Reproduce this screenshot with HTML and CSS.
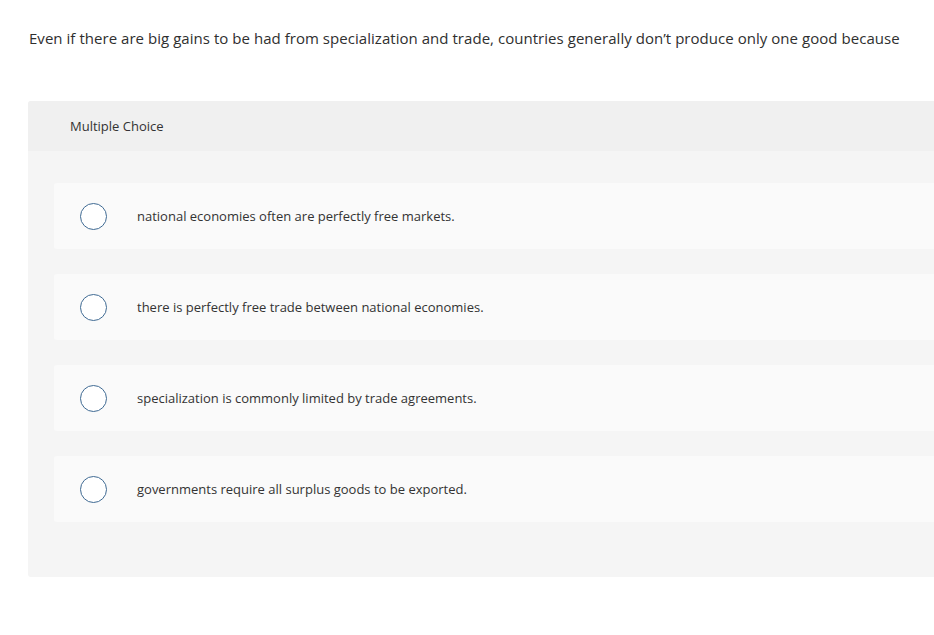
FILE: index.html
```html
<!DOCTYPE html>
<html>
<head>
<meta charset="utf-8">
<link rel="stylesheet" href="styles.css">
</head>
<body>
<div class="page">
  <p class="question">Even if there are big gains to be had from specialization and trade, countries generally don’t produce only one good because</p>
  <div class="panel">
    <div class="panel-header">Multiple Choice</div>
    <div class="options">
      <div class="option"><span class="radio"></span><span class="label">national economies often are perfectly free markets.</span></div>
      <div class="option"><span class="radio"></span><span class="label">there is perfectly free trade between national economies.</span></div>
      <div class="option"><span class="radio"></span><span class="label">specialization is commonly limited by trade agreements.</span></div>
      <div class="option"><span class="radio"></span><span class="label">governments require all surplus goods to be exported.</span></div>
    </div>
  </div>
</div>
</body>
</html>
```

FILE: styles.css
```css
html, body {
  margin: 0;
  padding: 0;
  background: #fff;
}
body {
  font-family: "Open Sans", "Lato", sans-serif;
  color: #333;
}
.page {
  padding: 28px 0 0 28px;
}
.question {
  margin: 0 0 0 1px;
  font-size: 15px;
  line-height: 20px;
  letter-spacing: 0.04px;
  color: #2f2f2f;
}
.panel {
  margin-top: 53px;
  background: #f5f5f5;
  border-radius: 3px 0 0 3px;
  overflow: hidden;
}
.panel-header {
  height: 50px;
  background: #f0f0f0;
  display: flex;
  align-items: center;
  padding-left: 42px;
  font-size: 13px;
  color: #333;
}
.options {
  display: flex;
  flex-direction: column;
  gap: 25px;
  padding: 32px 0 55px 26px;
}
.option {
  height: 66px;
  background: #fafafa;
  border-radius: 3px 0 0 3px;
  display: flex;
  align-items: center;
}
.radio {
  box-sizing: border-box;
  width: 27px;
  height: 27px;
  border: 1.5px solid #3f6a93;
  border-radius: 50%;
  background: #fff;
  margin-left: 26px;
  flex: none;
}
.label {
  margin-left: 30px;
  font-size: 13px;
  color: #333;
}
```
